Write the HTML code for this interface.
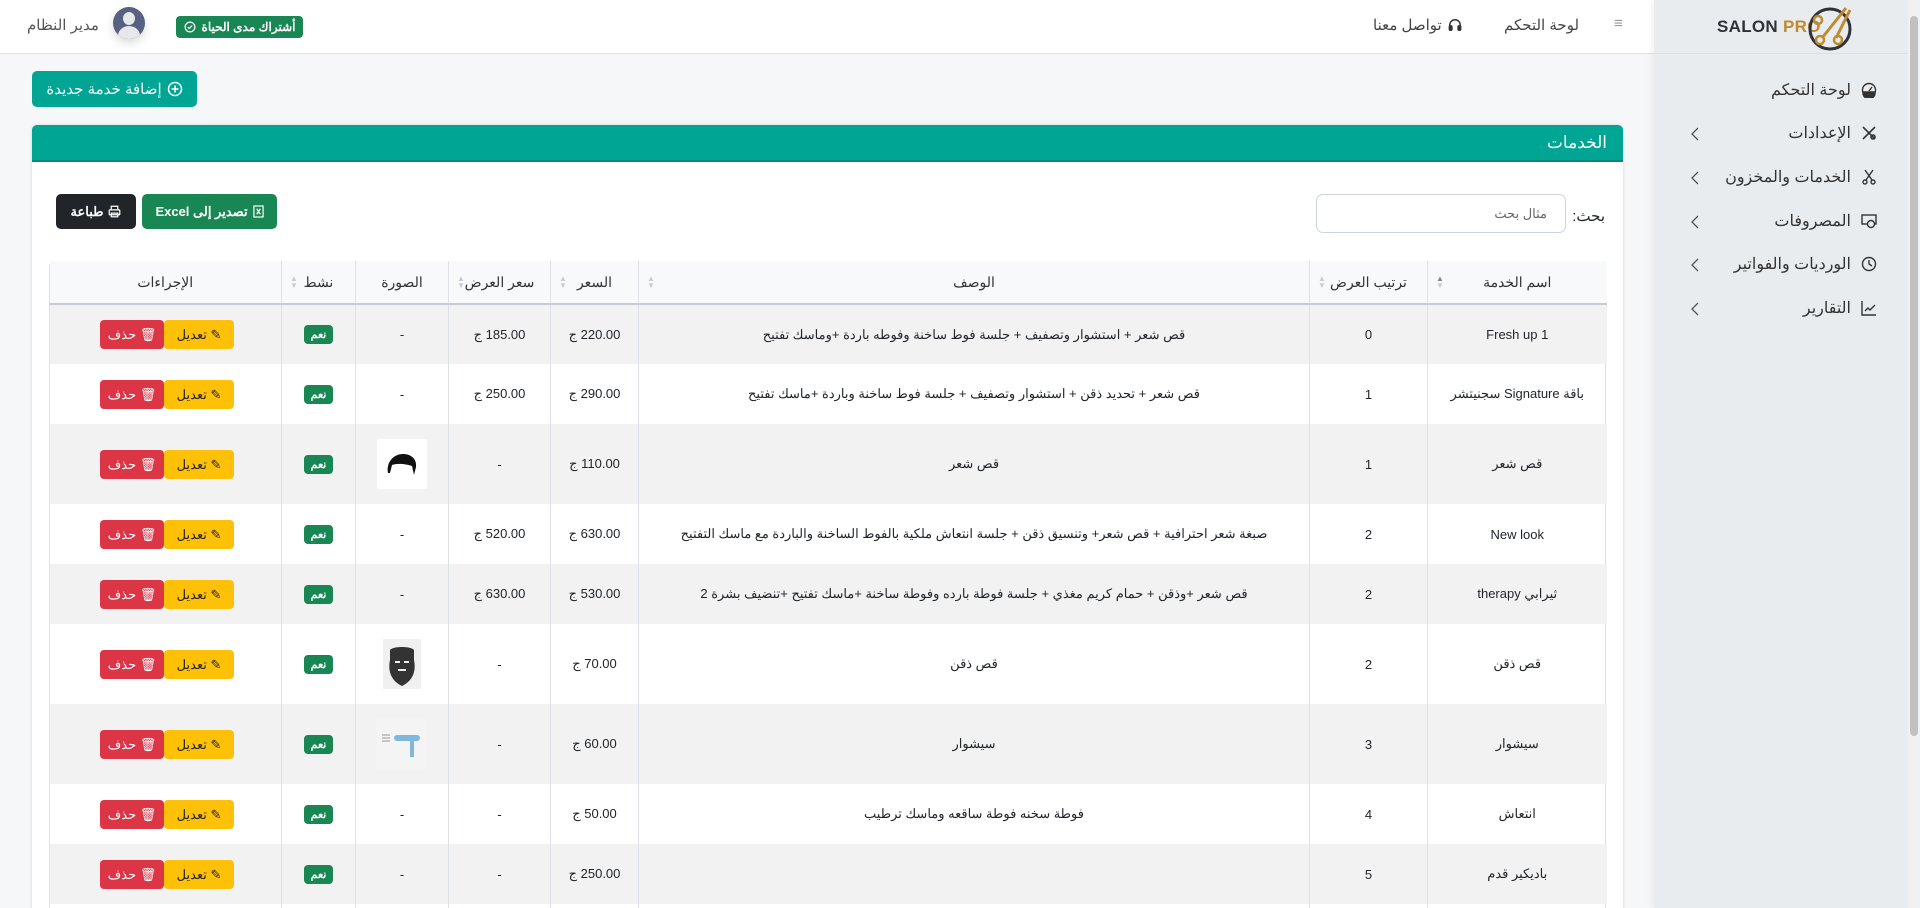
<!DOCTYPE html>
<html lang="ar" dir="rtl">
<head>
<meta charset="utf-8">
<style>
*{box-sizing:border-box;margin:0;padding:0}
html,body{width:1920px;height:908px;overflow:hidden}
body{font-family:"Liberation Sans","Noto Sans CJK SC",sans-serif;background:#f6f7f9;color:#212529;position:relative}
.sb{position:absolute;left:1654px;top:0;width:254px;height:908px;background:#e9ecef;box-shadow:-2px 0 6px rgba(0,0,0,.06)}
.logo{height:54px;border-bottom:1px solid #dcdfe3;position:relative}
.logo .t{position:absolute;left:63px;top:17px;font-weight:bold;font-size:17px;color:#2f3337;direction:ltr;letter-spacing:.3px}
.logo .t span{color:#c08a2e}
.nav div{position:absolute;right:31px;font-size:16px;color:#333;display:flex;align-items:center;gap:10px}
.nav svg{width:16px;height:16px}
.chev{position:absolute;left:36px;width:10px;height:14px}
.scroll{position:absolute;left:1908px;top:0;width:12px;height:908px;background:#f1f1f1}
.scroll div{position:absolute;left:2px;top:16px;width:8px;height:720px;background:#c1c1c1;border-radius:4px}
.top{position:absolute;left:0;top:0;width:1654px;height:54px;background:#fff;border-bottom:1px solid #dee2e6}
.top .a{position:absolute;font-size:15px;color:#444;top:16px}
.badge{position:absolute;left:176px;top:16px;width:127px;height:22px;background:#198754;border-radius:4px;color:#fff;font-size:12px;font-weight:bold;display:flex;align-items:center;justify-content:center;gap:6px}
.av{position:absolute;left:113px;top:7px;width:32px;height:32px;border-radius:50%;background:#596180;overflow:hidden;box-shadow:0 4px 10px rgba(0,0,0,.15)}
.av:before{content:"";position:absolute;left:10px;top:5px;width:12px;height:13px;border-radius:50%;background:#e6e8ec}
.av:after{content:"";position:absolute;left:5px;top:19px;width:22px;height:20px;border-radius:50%;background:#e6e8ec}
.add{position:absolute;left:32px;top:71px;width:165px;height:36px;background:#00a693;border-radius:5px;color:#fff;font-size:15px;display:flex;align-items:center;justify-content:center;gap:5px}
.card{position:absolute;left:32px;top:125px;width:1591px;height:800px;background:#fff;border-radius:5px;box-shadow:0 0 3px rgba(0,0,0,.15);overflow:hidden}
.ch{height:37px;background:#00a693;border-bottom:2px solid #008a7a;color:#fff;font-size:17px;padding:8px 16px 0}
.lbl{position:absolute;right:18px;top:82px;font-size:15px}
.search{position:absolute;left:1284px;top:69px;width:250px;height:39px;border:1px solid #ced4da;border-radius:7px;font-size:13px;color:#666;text-align:right;padding:11px 18px}
.btn{position:absolute;top:69px;height:35px;border-radius:5px;color:#fff;font-size:13px;font-weight:bold;display:flex;align-items:center;justify-content:center;gap:5px}
table{position:absolute;left:17px;top:136px;width:1557px;border-collapse:collapse;table-layout:fixed;font-size:13px}
.tw{position:absolute;left:17px;top:136px;width:1557px;height:700px;border:1px solid #dee2e6;border-radius:6px}
th{height:43px;background:#f8f9fa;font-weight:normal;font-size:14px;color:#333;border-left:1px solid #dee2e6;border-bottom:2px solid #c8ccd0;position:relative}
th .s{position:absolute;left:8px;top:14px;font-size:8px;color:#c8ccd0;line-height:7px}
td{text-align:center;border-left:1px solid #dee2e6;height:60px;font-size:13px}
tr.o td{background:#f2f2f2}
tr.i td{height:80px}
.n{display:inline-block;background:#198754;color:#fff;font-weight:bold;font-size:11px;padding:3px 7px;border-radius:4px}
.e,.d{display:inline-block;height:29px;line-height:29px;border-radius:4px;font-size:13px;vertical-align:middle}
.e{background:#ffc107;color:#222;width:70px}
.d{background:#dc3545;color:#fff;width:64px;margin-left:3px}
.img{width:50px;height:50px;margin:0 auto;background:#fff;display:flex;align-items:center;justify-content:center}
</style>
</head>
<body>
<div class="top">
  <div class="a" style="left:1614px;top:15px;color:#999">≡</div>
  <div class="a" style="left:1504px">لوحة التحكم</div>
  <div class="a" style="left:1373px;display:flex;gap:6px;align-items:center"><svg width="14" height="14" viewBox="0 0 16 16" fill="none" stroke="#333" stroke-width="1.6"><path d="M2 10V8a6 6 0 0 1 12 0v2"/><rect x="1.5" y="9" width="3" height="5" rx="1" fill="#333"/><rect x="11.5" y="9" width="3" height="5" rx="1" fill="#333"/></svg>تواصل معنا</div>
  <div class="badge">أشتراك مدى الحياة <svg width="12" height="12" viewBox="0 0 16 16" fill="none" stroke="#fff" stroke-width="1.6"><circle cx="8" cy="8" r="6.5"/><path d="M5 8l2 2 4-4"/></svg></div>
  <div class="av"></div>
  <div class="a" style="left:27px;color:#555">مدير النظام</div>
</div>
<div class="add"><svg width="16" height="16" viewBox="0 0 16 16" fill="none" stroke="#fff" stroke-width="1.5"><circle cx="8" cy="8" r="6.5"/><path d="M8 4.5v7M4.5 8h7"/></svg>إضافة خدمة جديدة</div>
<div class="card">
  <div class="ch">الخدمات</div>
  <div class="lbl">بحث:</div>
  <div class="search">مثال بحث</div>
  <div class="btn" style="left:110px;width:135px;background:#198754"><svg width="11" height="13" viewBox="0 0 12 14" fill="none" stroke="#fff" stroke-width="1.3"><rect x="1" y="1" width="10" height="12"/><path d="M4 4l4 6M8 4l-4 6"/></svg>تصدير إلى Excel</div>
  <div class="btn" style="left:24px;width:80px;background:#212529"><svg width="13" height="13" viewBox="0 0 16 16" fill="none" stroke="#fff" stroke-width="1.5"><path d="M4 6V1.5h8V6"/><rect x="1.5" y="6" width="13" height="6" rx="1"/><rect x="4" y="10" width="8" height="4.5"/></svg>طباعة</div>
  <div class="tw"></div>
  <table>
    <colgroup><col style="width:179px"><col style="width:118px"><col style="width:671px"><col style="width:88px"><col style="width:102px"><col style="width:93px"><col style="width:74px"><col style="width:232px"></colgroup>
    <tr><th>اسم الخدمة<span class="s" style="color:#888">▲<br><span style="color:#ccc">▼</span></span></th><th>ترتيب العرض<span class="s">▲<br>▼</span></th><th>الوصف<span class="s">▲<br>▼</span></th><th>السعر<span class="s">▲<br>▼</span></th><th>سعر العرض<span class="s">▲<br>▼</span></th><th>الصورة</th><th>نشط<span class="s">▲<br>▼</span></th><th style="border-left:none">الإجراءات</th></tr>
    <tr class="o"><td>Fresh up 1</td><td>0</td><td>قص شعر + استشوار وتصفيف + جلسة فوط ساخنة وفوطه باردة +وماسك تفتيح</td><td>220.00 ج</td><td>185.00 ج</td><td>-</td><td><span class="n">نعم</span></td><td><span class="e">✎ تعديل</span><span class="d">🗑 حذف</span></td></tr>
    <tr><td>باقة Signature سجنيتشر</td><td>1</td><td>قص شعر + تحديد ذقن + استشوار وتصفيف + جلسة فوط ساخنة وباردة +ماسك تفتيح</td><td>290.00 ج</td><td>250.00 ج</td><td>-</td><td><span class="n">نعم</span></td><td><span class="e">✎ تعديل</span><span class="d">🗑 حذف</span></td></tr>
    <tr class="o i"><td>قص شعر</td><td>1</td><td>قص شعر</td><td>110.00 ج</td><td>-</td><td><div class="img"><svg width="34" height="26" viewBox="0 0 34 26"><path d="M3 22C1 12 8 3 18 3c8 0 14 5 13 13l-2 8-2-9c-6-2-14-3-20-1l-2 8z" fill="#111"/></svg></div></td><td><span class="n">نعم</span></td><td><span class="e">✎ تعديل</span><span class="d">🗑 حذف</span></td></tr>
    <tr><td>New look</td><td>2</td><td>صبغة شعر احترافية + قص شعر+ وتنسيق ذقن + جلسة انتعاش ملكية بالفوط الساخنة والباردة مع ماسك التفتيح</td><td>630.00 ج</td><td>520.00 ج</td><td>-</td><td><span class="n">نعم</span></td><td><span class="e">✎ تعديل</span><span class="d">🗑 حذف</span></td></tr>
    <tr class="o"><td>ثيرابي therapy</td><td>2</td><td>قص شعر +وذقن + حمام كريم مغذي + جلسة فوطة بارده وفوطة ساخنة +ماسك تفتيح +تنضيف بشرة 2</td><td>530.00 ج</td><td>630.00 ج</td><td>-</td><td><span class="n">نعم</span></td><td><span class="e">✎ تعديل</span><span class="d">🗑 حذف</span></td></tr>
    <tr class="i"><td>قص ذقن</td><td>2</td><td>قص ذقن</td><td>70.00 ج</td><td>-</td><td><div class="img" style="width:38px;background:#f0f0f0"><svg width="32" height="48" viewBox="0 0 32 48"><path d="M4 10c3-4 21-4 24 0v10c2 10 0 20-12 26C4 40 2 30 4 20z" fill="#333"/><path d="M9 22h5M18 22h5M12 30h8" stroke="#eee" stroke-width="2"/></svg></div></td><td><span class="n">نعم</span></td><td><span class="e">✎ تعديل</span><span class="d">🗑 حذف</span></td></tr>
    <tr class="o i"><td>سيشوار</td><td>3</td><td>سيشوار</td><td>60.00 ج</td><td>-</td><td><div class="img" style="background:#f4f4f4"><svg width="44" height="30" viewBox="0 0 44 30"><path d="M2 6h8M2 9h8M2 12h8" stroke="#999"/><rect x="14" y="6" width="26" height="6" rx="3" fill="#7fb8dc"/><rect x="30" y="10" width="4" height="18" fill="#7fb8dc"/></svg></div></td><td><span class="n">نعم</span></td><td><span class="e">✎ تعديل</span><span class="d">🗑 حذف</span></td></tr>
    <tr><td>انتعاش</td><td>4</td><td>فوطة سخنه فوطة ساقعه وماسك ترطيب</td><td>50.00 ج</td><td>-</td><td>-</td><td><span class="n">نعم</span></td><td><span class="e">✎ تعديل</span><span class="d">🗑 حذف</span></td></tr>
    <tr class="o"><td>باديكير قدم</td><td>5</td><td></td><td>250.00 ج</td><td>-</td><td>-</td><td><span class="n">نعم</span></td><td><span class="e">✎ تعديل</span><span class="d">🗑 حذف</span></td></tr>
    <tr><td></td><td></td><td></td><td></td><td></td><td></td><td></td><td></td></tr>
  </table>
</div>
<div class="sb">
  <div class="logo"><div class="t">SALON <span>PRO</span></div>
    <svg style="position:absolute;left:152px;top:2px" width="52" height="50" viewBox="0 0 52 50"><circle cx="24" cy="27" r="20" fill="none" stroke="#2f3337" stroke-width="3"/><path d="M16 36L40 6M30 36L44 8" stroke="#c08a2e" stroke-width="3" fill="none"/><circle cx="14" cy="38" r="4" fill="none" stroke="#c08a2e" stroke-width="2.5"/><circle cx="32" cy="38" r="4" fill="none" stroke="#c08a2e" stroke-width="2.5"/><circle cx="12" cy="18" r="4" fill="none" stroke="#c08a2e" stroke-width="2.5"/></svg>
  </div>
  <div class="nav">
    <div style="top:80px"><svg viewBox="0 0 16 16" fill="none" stroke="#333" stroke-width="1.4"><circle cx="8" cy="8" r="6.5"/><path d="M2 10h12v1a6 6 0 0 1-12 0z" fill="#333"/><path d="M8 9l3-4"/></svg>لوحة التحكم</div>
    <div style="top:123px"><svg viewBox="0 0 16 16" fill="none" stroke="#333" stroke-width="1.6"><path d="M2 2l12 12M14 2L2 14"/><circle cx="12" cy="12" r="2"/></svg>الإعدادات</div>
    <div style="top:167px"><svg viewBox="0 0 16 16" fill="none" stroke="#333" stroke-width="1.4"><path d="M4 1l7 10M12 1L5 11"/><circle cx="4" cy="13" r="2"/><circle cx="12" cy="13" r="2"/></svg>الخدمات والمخزون</div>
    <div style="top:211px"><svg viewBox="0 0 16 16" fill="none" stroke="#333" stroke-width="1.4"><rect x="1" y="2" width="14" height="9"/><circle cx="10" cy="11" r="3.5" fill="#e9ecef"/></svg>المصروفات</div>
    <div style="top:254px"><svg viewBox="0 0 16 16" fill="none" stroke="#333" stroke-width="1.4"><circle cx="8" cy="8" r="6.5"/><path d="M8 4v4l3 2"/></svg>الورديات والفواتير</div>
    <div style="top:298px"><svg viewBox="0 0 16 16" fill="none" stroke="#333" stroke-width="1.4"><path d="M1 1v14h14"/><path d="M4 11l3-3 2 2 5-5"/></svg>التقارير</div>
  </div>
  <svg class="chev" style="top:127px" viewBox="0 0 10 14" fill="none" stroke="#555" stroke-width="1.3"><path d="M8 1L2 7l6 6"/></svg>
  <svg class="chev" style="top:171px" viewBox="0 0 10 14" fill="none" stroke="#555" stroke-width="1.3"><path d="M8 1L2 7l6 6"/></svg>
  <svg class="chev" style="top:215px" viewBox="0 0 10 14" fill="none" stroke="#555" stroke-width="1.3"><path d="M8 1L2 7l6 6"/></svg>
  <svg class="chev" style="top:258px" viewBox="0 0 10 14" fill="none" stroke="#555" stroke-width="1.3"><path d="M8 1L2 7l6 6"/></svg>
  <svg class="chev" style="top:302px" viewBox="0 0 10 14" fill="none" stroke="#555" stroke-width="1.3"><path d="M8 1L2 7l6 6"/></svg>
</div>
<div class="scroll"><div></div></div>
</body>
</html>
